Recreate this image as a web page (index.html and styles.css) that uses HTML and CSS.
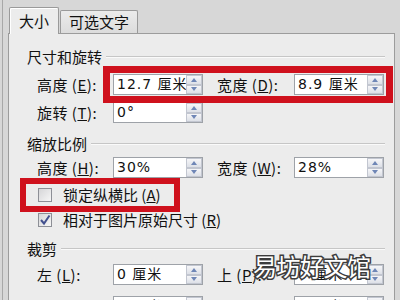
FILE: index.html
```html
<!DOCTYPE html>
<html lang="zh-CN">
<head>
    <meta charset="UTF-8">
    <meta name="viewport" content="width=device-width, initial-scale=1.0">
    <title>设置图片格式 - 大小</title>
    <link rel="stylesheet" href="styles.css">
</head>
<body>
    <div class="dialog">
        <div class="tabs">
            <div class="tab tab-active">大小</div>
            <div class="tab">可选文字</div>
        </div>
        <div class="panel">
            <div class="group-title title-first"><span>尺寸和旋转</span></div>
            <div class="field-row row-after-title">
                <label class="field-label">高度 (<u>E</u>):</label>
                <div class="spin">
                    <span class="spin-value">12.7 厘米</span>
                    <span class="spin-btns"><span class="spin-up"></span><span class="spin-down"></span></span>
                </div>
                <label class="field-label label-right">宽度 (<u>D</u>):</label>
                <div class="spin">
                    <span class="spin-value">8.9 厘米</span>
                    <span class="spin-btns"><span class="spin-up"></span><span class="spin-down"></span></span>
                </div>
            </div>
            <div class="field-row">
                <label class="field-label">旋转 (<u>T</u>):</label>
                <div class="spin">
                    <span class="spin-value">0°</span>
                    <span class="spin-btns"><span class="spin-up"></span><span class="spin-down"></span></span>
                </div>
            </div>

            <div class="group-title"><span>缩放比例</span></div>
            <div class="field-row row-tight">
                <label class="field-label">高度 (<u>H</u>):</label>
                <div class="spin">
                    <span class="spin-value">30%</span>
                    <span class="spin-btns"><span class="spin-up"></span><span class="spin-down"></span></span>
                </div>
                <label class="field-label label-right">宽度 (<u>W</u>):</label>
                <div class="spin">
                    <span class="spin-value">28%</span>
                    <span class="spin-btns"><span class="spin-up"></span><span class="spin-down"></span></span>
                </div>
            </div>
            <div class="check-row">
                <span class="checkbox"></span>
                <span>锁定纵横比 (<u>A</u>)</span>
            </div>
            <div class="check-row">
                <span class="checkbox">
                    <svg width="12" height="12" viewBox="0 0 12 12"><path d="M2 6 L5 9.5 L10.5 1.5" fill="none" stroke="#42508e" stroke-width="2"/></svg>
                </span>
                <span>相对于图片原始尺寸 (<u>R</u>)</span>
            </div>

            <div class="group-title"><span>裁剪</span></div>
            <div class="field-row">
                <label class="field-label">左 (<u>L</u>):</label>
                <div class="spin">
                    <span class="spin-value">0 厘米</span>
                    <span class="spin-btns"><span class="spin-up"></span><span class="spin-down"></span></span>
                </div>
                <label class="field-label label-right">上 (<u>P</u>):</label>
                <div class="spin">
                    <span class="spin-value">0 厘米</span>
                    <span class="spin-btns"><span class="spin-up"></span><span class="spin-down"></span></span>
                </div>
            </div>
            <div class="field-row row-loose">
                <label class="field-label">右 (<u>G</u>):</label>
                <div class="spin">
                    <span class="spin-value">0 厘米</span>
                    <span class="spin-btns"><span class="spin-up"></span><span class="spin-down"></span></span>
                </div>
                <label class="field-label label-right">下 (<u>M</u>):</label>
                <div class="spin">
                    <span class="spin-value">0 厘米</span>
                    <span class="spin-btns"><span class="spin-up"></span><span class="spin-down"></span></span>
                </div>
            </div>
        </div>
    </div>

    <!-- red annotation boxes drawn over the dialog -->
    <div class="mark mark-size"></div>
    <div class="mark mark-lock"></div>

    <div class="watermark">易坊好文馆</div>
</body>
</html>
```

FILE: styles.css
```css
body {
    margin: 0;
    width: 400px;
    height: 300px;
    overflow: hidden;
    position: relative;
    background-color: #d7d7d7;
    font-family: "Noto Sans CJK SC", "DejaVu Sans", sans-serif;
    font-size: 15px;
    line-height: 16px;
    color: #111;
}
.dialog {
    margin-left: 2px;
    padding-top: 7px;
    padding-left: 5px;
    border-left: 1px solid #a8a8a8;
    height: 293px;
}
.tabs {
    display: flex;
    align-items: flex-end;
    height: 26px;
}
.tab {
    margin-left: 1px;
    width: 78px;
    height: 23px;
    box-sizing: border-box;
    border: 1px solid #9a9a9a;
    border-bottom: none;
    border-radius: 2px 2px 0 0;
    background: linear-gradient(#ebebeb, #dcdcdc);
    display: flex;
    align-items: center;
    justify-content: center;
}
.tab-active {
    position: relative;
    z-index: 1;
    width: 50px;
    height: 27px;
    margin-bottom: -1px;
    background: #ececec;
    box-shadow: inset 1px 1px 0 #fff;
}
.panel {
    width: 387px;
    height: 300px;
    box-sizing: border-box;
    border: 1px solid #9c9c9c;
    background-color: #ececec;
    padding: 0 9px 0 18px;
}
.group-title {
    display: flex;
    align-items: center;
    height: 16px;
    margin-top: 13px;
}
.group-title::after {
    content: "";
    flex: 1;
    margin-left: 4px;
    border-top: 1px solid #c6c6c6;
    border-bottom: 1px solid #fafafa;
}
.title-first {
    margin-top: 15px;
}
.field-row {
    display: flex;
    align-items: center;
    height: 21px;
    margin-top: 7px;
    padding-left: 10px;
}
.row-after-title {
    margin-top: 9px;
}
.row-tight {
    margin-top: 5px;
}
.row-loose {
    margin-top: 11px;
}
.field-label {
    width: 76px;
    letter-spacing: 0.5px;
}
.label-right {
    width: 77px;
    margin-left: 14px;
}
.spin {
    width: 90px;
    height: 21px;
    box-sizing: border-box;
    border: 1px solid #9ea2a8;
    background-color: #fff;
    display: flex;
}
.spin-value {
    flex: 1;
    overflow: hidden;
    white-space: nowrap;
    padding-left: 3px;
    line-height: 19px;
    font-family: "DejaVu Sans", "Noto Sans CJK SC", sans-serif;
    font-size: 14px;
    letter-spacing: 1px;
}
.spin-btns {
    width: 16px;
    display: flex;
    flex-direction: column;
}
.spin-up,
.spin-down {
    flex: 1;
    border: 1px solid #c2c6d0;
    background: linear-gradient(#f6f6f8, #dde0e7);
    display: flex;
    align-items: center;
    justify-content: center;
}
.spin-up::before {
    content: "";
    border-left: 3px solid transparent;
    border-right: 3px solid transparent;
    border-bottom: 4px solid #6f86b6;
}
.spin-down::before {
    content: "";
    border-left: 3px solid transparent;
    border-right: 3px solid transparent;
    border-top: 4px solid #6f86b6;
}
.check-row {
    display: flex;
    align-items: center;
    height: 16px;
    margin-top: 9px;
    padding-left: 11px;
}
.checkbox {
    width: 14px;
    height: 14px;
    box-sizing: border-box;
    margin-right: 11px;
    border: 1px solid #8d8f96;
    background: linear-gradient(135deg, #d6d6d8, #f6f6f6);
    display: flex;
    align-items: center;
    justify-content: center;
}
.mark {
    position: absolute;
    box-sizing: border-box;
    border: 7px solid #cf111d;
}
.mark-size {
    left: 103px;
    top: 66px;
    width: 290px;
    height: 37px;
}
.mark-lock {
    left: 20px;
    top: 178px;
    width: 160px;
    height: 34px;
    border-width: 6px;
}
.watermark {
    position: absolute;
    left: 253px;
    top: 251px;
    font-size: 24px;
    line-height: 30px;
    letter-spacing: -0.5px;
    color: #fff;
    -webkit-text-stroke: 3px #3c3c3c;
    paint-order: stroke fill;
}
```
